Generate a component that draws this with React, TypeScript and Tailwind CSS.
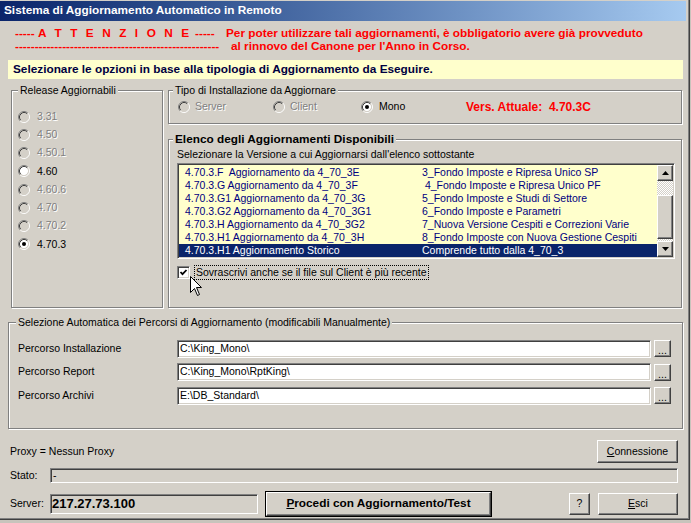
import React from "react";

const raised =
  "bg-[#d4d0c8] border border-t-white border-l-white border-r-[#404040] border-b-[#404040] shadow-[inset_-1px_-1px_0_#808080]";
const sunken =
  "border border-t-[#808080] border-l-[#808080] border-r-white border-b-white shadow-[inset_1px_1px_0_#404040,inset_-1px_-1px_0_#d4d0c8]";
const etched =
  "border border-[#808080] shadow-[inset_1px_1px_0_#ffffff,1px_1px_0_#ffffff]";

const releases = [
  { v: "3.31", on: false },
  { v: "4.50", on: false },
  { v: "4.50.1", on: false },
  { v: "4.60", on: true },
  { v: "4.60.6", on: false },
  { v: "4.70", on: false },
  { v: "4.70.2", on: false },
  { v: "4.70.3", on: true, checked: true },
];

const updates = [
  ["4.70.3.F  Aggiornamento da 4_70_3E", "3_Fondo Imposte e Ripresa Unico SP"],
  ["4.70.3.G Aggiornamento da 4_70_3F", " 4_Fondo Imposte e Ripresa Unico PF"],
  ["4.70.3.G1 Aggiornamento da 4_70_3G", "5_Fondo Imposte e Studi di Settore"],
  ["4.70.3.G2 Aggiornamento da 4_70_3G1", "6_Fondo Imposte e Parametri"],
  ["4.70.3.H Aggiornamento da 4_70_3G2", "7_Nuova Versione Cespiti e Correzioni Varie"],
  ["4.70.3.H1 Aggiornamento da 4_70_3H", "8_Fondo Imposte con Nuova Gestione Cespiti"],
  ["4.70.3.H1 Aggiornamento Storico", "Comprende tutto dalla 4_70_3"],
];

const paths = [
  ["Percorso Installazione", "C:\\King_Mono\\"],
  ["Percorso Report", "C:\\King_Mono\\RptKing\\"],
  ["Percorso Archivi", "E:\\DB_Standard\\"],
];

function Radio({ checked = false, disabled = false }: { checked?: boolean; disabled?: boolean }) {
  return (
    <svg width="12" height="12" viewBox="0 0 12 12" className="shrink-0">
      <circle cx="6" cy="6" r="4.2" fill={disabled ? "#d4d0c8" : "#ffffff"} />
      <path d="M2.11 9.89 A5.5 5.5 0 0 1 9.89 2.11" stroke="#808080" fill="none" />
      <path d="M9.89 2.11 A5.5 5.5 0 0 1 2.11 9.89" stroke="#ffffff" fill="none" />
      <path d="M2.82 9.18 A4.5 4.5 0 0 1 9.18 2.82" stroke="#404040" fill="none" />
      <path d="M9.18 2.82 A4.5 4.5 0 0 1 2.82 9.18" stroke="#d4d0c8" fill="none" />
      {checked && <circle cx="6" cy="6" r="2" fill="#000000" />}
    </svg>
  );
}

function Arrow({ down = false }: { down?: boolean }) {
  return (
    <div className={`w-[16px] h-[16px] flex items-center justify-center ${raised}`}>
      <svg width="7" height="4" viewBox="0 0 7 4">
        <polygon points={down ? "0,0 7,0 3.5,4" : "3.5,0 7,4 0,4"} fill="#000000" />
      </svg>
    </div>
  );
}

export default function App() {
  return (
    <div className="w-[691px] h-[523px] overflow-hidden bg-[#c8c4bc] font-['Liberation_Sans',Arial,sans-serif] text-[10.5px] text-black">
      <div className="relative w-[690px] h-[520px] bg-[#d4d0c8] border-r border-b border-[#404040] shadow-[inset_-1px_-1px_0_#808080] pt-[1px] pr-[3px]">
        {/* title bar */}
        <div className="h-[20px] bg-linear-to-r from-[#0a246a] to-[#a6caf0] flex items-center pl-[4px] text-white font-bold text-[11.8px]">
          Sistema di Aggiornamento Automatico in Remoto
        </div>

        {/* warning */}
        <div className="mt-[6px] pl-[15px] text-[#ff0000] font-bold text-[11.8px] leading-[13px]">
          <div className="flex">
            <div className="w-[211px] whitespace-pre">
              {"----- "}
              <span className="tracking-[2.6px]">A T T E N Z I O N E</span>
              {" -----"}
            </div>
            <div>Per poter utilizzare tali aggiornamenti, è obbligatorio avere già provveduto</div>
          </div>
          <div className="flex">
            <div className="w-[211px] whitespace-nowrap">{"-".repeat(52)}</div>
            <div className="pl-[5px]">al rinnovo del Canone per l'Anno in Corso.</div>
          </div>
        </div>

        <div className="mt-[7px] ml-[8px] w-[675px] h-[19px] bg-[#ffffcc] flex items-center pl-[5px] font-bold text-[11.8px] text-[#000040]">
          Selezionare le opzioni in base alla tipologia di Aggiornamento da Eseguire.
        </div>

        {/* middle groups */}
        <div className="mt-[5px] ml-[11px] flex">
          <fieldset className={`w-[152px] h-[224px] ${etched}`}>
            <legend className="ml-[6px] px-[2px] leading-[13px] bg-[#d4d0c8]">Release Aggiornabili</legend>
            <div className="pt-[10.5px] pl-[6px]">
              {releases.map((r) => (
                <div key={r.v} className="h-[18.25px] flex items-center gap-[7px]">
                  <Radio checked={r.checked} disabled={!r.on} />
                  <span className={r.on ? "text-black" : "text-[#808080] [text-shadow:1px_1px_0_#ffffff]"}>{r.v}</span>
                </div>
              ))}
            </div>
          </fieldset>

          <div className="ml-[5px] w-[514px]">
            <fieldset className={`h-[40px] ${etched}`}>
              <legend className="ml-[4px] px-[2px] leading-[13px] bg-[#d4d0c8]">Tipo di Installazione da Aggiornare</legend>
              <div className="pt-[3px] pl-[9px] h-[16px] flex items-center">
                <div className="w-[95px] flex items-center gap-[5px]">
                  <Radio disabled />
                  <span className="text-[#808080] [text-shadow:1px_1px_0_#ffffff]">Server</span>
                </div>
                <div className="w-[88px] flex items-center gap-[5px]">
                  <Radio disabled />
                  <span className="text-[#808080] [text-shadow:1px_1px_0_#ffffff]">Client</span>
                </div>
                <div className="w-[105px] flex items-center gap-[6px]">
                  <Radio checked />
                  <span>Mono</span>
                </div>
                <span className="whitespace-pre font-bold text-[12px] text-[#ff0000]">Vers. Attuale:  4.70.3C</span>
              </div>
            </fieldset>

            <fieldset className={`mt-[8px] h-[176px] ${etched}`}>
              <legend className="ml-[4px] px-[2px] leading-[14px] font-bold text-[11.8px] bg-[#d4d0c8]">
                Elenco degli Aggiornamenti Disponibili
              </legend>
              <div className="pl-[8px]">
                <div className="mt-[2px] leading-[13px]">Selezionare la Versione a cui Aggiornarsi dall'elenco sottostante</div>
                <div className={`mt-[2px] w-[498px] h-[96px] bg-[#ffffcc] flex ${sunken} p-[1px]`}>
                  <div className="flex-1 pt-[1px] text-[#000080]">
                    {updates.map(([a, b], i) => (
                      <div
                        key={i}
                        className={`h-[13px] leading-[13px] flex whitespace-pre pl-[6px] ${
                          i === updates.length - 1 ? "bg-[#0a246a] text-white" : ""
                        }`}
                      >
                        <span className="w-[237px]">{a}</span>
                        <span>{b}</span>
                      </div>
                    ))}
                  </div>
                  <div className="w-[16px] flex flex-col">
                    <Arrow />
                    <div className="h-[14px] [background:repeating-conic-gradient(#d4d0c8_0%_25%,#ffffff_0%_50%)_0_0/2px_2px]" />
                    <div className={`h-[44px] ${raised}`} />
                    <div className="flex-1 [background:repeating-conic-gradient(#d4d0c8_0%_25%,#ffffff_0%_50%)_0_0/2px_2px]" />
                    <Arrow down />
                  </div>
                </div>
                <div className="mt-[5.5px] h-[15px] flex items-center">
                  <div className={`w-[13px] h-[13px] bg-white ${sunken} flex items-center justify-center`}>
                    <svg width="9" height="9" viewBox="0 0 9 9">
                      <polyline points="1.5,4 3.5,6.2 7.5,2" stroke="#000000" strokeWidth="1.8" fill="none" />
                    </svg>
                  </div>
                  <span className="ml-[4px] px-[1px] h-[15px] leading-[13px] border border-dotted border-black">
                    Sovrascrivi anche se il file sul Client è più recente
                  </span>
                </div>
              </div>
            </fieldset>
          </div>
        </div>

        {/* paths */}
        <fieldset className={`mt-[8px] ml-[8px] w-[675px] h-[113px] ${etched}`}>
          <legend className="ml-[7px] px-[2px] leading-[13px] bg-[#d4d0c8]">
            Selezione Automatica dei Percorsi di Aggiornamento (modificabili Manualmente)
          </legend>
          <div className="pt-[10.5px] pl-[9px] flex flex-col gap-[5.5px]">
            {paths.map(([label, value]) => (
              <div key={label} className="flex items-center h-[18px]">
                <span className="w-[159px]">{label}</span>
                <div className={`w-[474px] h-[18px] bg-white ${sunken} flex items-center pl-[2px]`}>{value}</div>
                <div className={`ml-[3px] w-[17px] h-[17px] ${raised} flex items-end justify-center pb-[2px] leading-[8px]`}>...</div>
              </div>
            ))}
          </div>
        </fieldset>

        {/* bottom */}
        <div className="ml-[10px] w-[668px]">
          <div className="mt-[11px] h-[23px] flex items-center justify-between">
            <span>Proxy = Nessun Proxy</span>
            <div className={`w-[81px] h-[23px] ${raised} flex items-center justify-center`}>
              <span><span className="underline">C</span>onnessione</span>
            </div>
          </div>
          <div className="mt-[5px] h-[15px] flex items-center">
            <span className="w-[40px]">Stato:</span>
            <div className={`flex-1 h-[15px] ${sunken} flex items-center pl-[2px] leading-[11px]`}>-</div>
          </div>
          <div className="mt-[9px] h-[24px] flex items-center">
            <span className="w-[40px]">Server:</span>
            <div className={`w-[208px] h-[20px] ${sunken} flex items-center pl-[1px] font-bold text-[13px]`}>217.27.73.100</div>
            <div className={`ml-[8px] w-[225px] h-[24px] ${raised} outline outline-1 outline-black flex items-center justify-center font-bold text-[11.8px]`}>
              <span><span className="underline">P</span>rocedi con Aggiornamento/Test</span>
            </div>
            <div className={`ml-auto w-[21px] h-[22px] ${raised} flex items-center justify-center`}>?</div>
            <div className={`ml-[8px] w-[80px] h-[22px] ${raised} flex items-center justify-center`}>
              <span><span className="underline">E</span>sci</span>
            </div>
          </div>
        </div>

        {/* mouse pointer */}
        <svg className="absolute left-[190px] top-[276px]" width="13" height="21" viewBox="0 0 13 21">
          <polygon points="0.5,0.5 0.5,16.5 4.5,12.5 7.5,19.5 9.5,18.5 6.5,11.5 11.5,11.5" fill="#ffffff" stroke="#000000" />
        </svg>
      </div>
    </div>
  );
}
